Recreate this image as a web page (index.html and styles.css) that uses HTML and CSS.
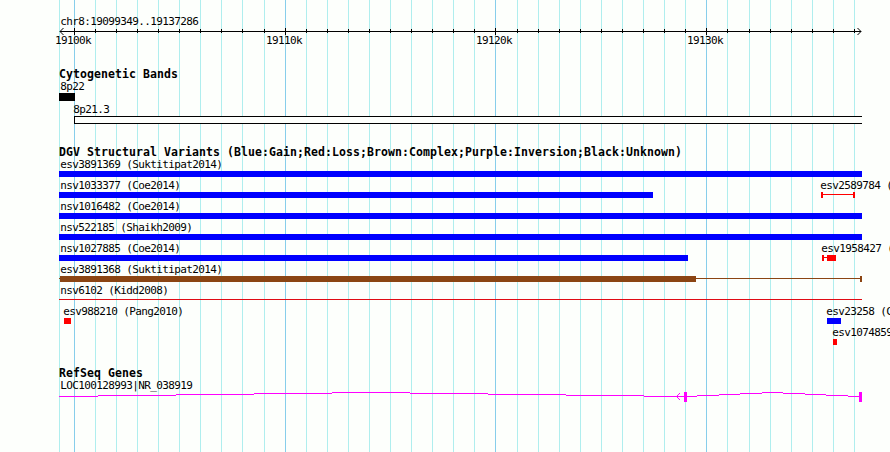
FILE: index.html
```
<!DOCTYPE html>
<html>
	<head>
		<meta charset="utf-8">
		<title>chr8:19099349..19137286</title>
		<link rel="stylesheet" href="styles.css">
	</head>
	<body>
		<div class="panel">
			<svg class="grid" id="grid" width="890" height="452"></svg>

			<div class="track ruler">
				<svg width="890" height="70">
					<text x="60.3" y="25">chr8:19099349..19137286</text>
					<g id="ticks"></g>
					<path class="axis" d="M60 31.5H861" />
					<path class="arrow" d="M63.5 28L60 31.5L63.5 35M857.5 28L861 31.5L857.5 35" />
					<text x="55" y="44">19100k</text>
					<text x="266" y="44">19110k</text>
					<text x="476" y="44">19120k</text>
					<text x="687" y="44">19130k</text>
				</svg>
			</div>

			<div class="track bands">
				<h2>Cytogenetic Bands</h2>
				<svg width="890" height="66">
					<text x="60.3" y="8">8p22</text>
					<rect x="59" y="11" width="16" height="8" />
					<text x="73.3" y="31">8p21.3</text>
					<rect class="white" x="74" y="34" width="788" height="8" />
					<path class="axis" d="M862 34.5H74.5V41.5H862" />
				</svg>
			</div>

			<div class="track variants">
				<h2>DGV Structural Variants (Blue:Gain;Red:Loss;Brown:Complex;Purple:Inversion;Black:Unknown)</h2>
				<svg width="890" height="209">
					<text x="60.3" y="8">esv3891369 (Suktitipat2014)</text>
					<rect class="gain" x="59" y="11" width="803" height="6" />

					<text x="60.3" y="29">nsv1033377 (Coe2014)</text>
					<rect class="gain" x="59" y="32" width="594" height="6" />
					<text x="820.3" y="29">esv2589784 (</text>
					<path class="loss" d="M821 32h2v2h30v-2h2v6h-2v-3h-30v3h-2z" />

					<text x="60.3" y="50">nsv1016482 (Coe2014)</text>
					<rect class="gain" x="59" y="53" width="803" height="6" />

					<text x="60.3" y="71">nsv522185 (Shaikh2009)</text>
					<rect class="gain" x="59" y="74" width="803" height="6" />

					<text x="60.3" y="92">nsv1027885 (Coe2014)</text>
					<rect class="gain" x="59" y="95" width="629" height="6" />
					<text x="821.3" y="92">esv1958427 (</text>
					<path class="loss" d="M822 95h2v2h3v-2h9v6h-9v-3h-3v3h-2z" />

					<text x="60.3" y="113">esv3891368 (Suktitipat2014)</text>
					<path class="complex" d="M59 118h1v-2h636v2h164v-2h2v6h-2v-3h-164v3h-636v-3h-1z" />

					<text x="60.3" y="134">nsv6102 (Kidd2008)</text>
					<rect class="line" x="59" y="139" width="803" height="1" />

					<text x="63.3" y="155">esv988210 (Pang2010)</text>
					<rect class="loss" x="64" y="158" width="7" height="6" />
					<text x="826.3" y="155">esv23258 (C</text>
					<rect class="gain" x="827" y="158" width="14" height="6" />

					<text x="832.3" y="176">esv1074859</text>
					<rect class="loss" x="833" y="179" width="4" height="6" />
				</svg>
			</div>

			<div class="track genes">
				<h2>RefSeq Genes</h2>
				<svg width="890" height="71">
					<text x="60.3" y="8">LOC100128993|NR_038919</text>
					<path class="intron" d="M59 15.5H98M98 14.5H176M176 13.5H254M254 12.5H332M332 11.5H410M410 12.5H488M488 13.5H566M566 14.5H644M644 15.5H684" />
					<path class="intron" d="M687 15.5H697M697 14.5H719M719 13.5H740M740 12.5H762M762 11.5H783M783 12.5H805M805 13.5H826M826 14.5H848M848 15.5H859" />
					<path class="intron arrow" d="M680 12L676.5 15.5L680 19" />
					<rect class="exon" x="684" y="11" width="3" height="10" />
					<rect class="exon" x="859" y="11" width="3" height="10" />
				</svg>
			</div>
		</div>

		<script type="text/javascript">
			var grid = document.getElementById("grid");
			var ticks = document.getElementById("ticks");
			var ns = "http://www.w3.org/2000/svg";

			function addRect(parent, x, y, h, cls) {
				var r = document.createElementNS(ns, "rect");
				r.setAttribute("x", x);
				r.setAttribute("y", y);
				r.setAttribute("width", 1);
				r.setAttribute("height", h);
				r.setAttribute("class", cls);
				parent.appendChild(r);
			}

			addRect(grid, 59, 0, 452, "minor");
			// one line per 1k, every tenth is major
			for (var i = 0; i <= 37; i++) {
				var x = Math.floor(74.195 + i * 21.09);
				var major = i % 10 == 0;
				addRect(grid, x, 0, 452, major ? "major" : "minor");
				addRect(ticks, x, major ? 28 : 29, major ? 7 : 4, "tick");
			}
		</script>
	</body>
</html>
```
FILE: styles.css
```
body {
	margin: 0;
	background: #fdfffc;
	overflow: hidden;
}

.panel {
	position: relative;
	width: 890px;
	height: 452px;
	overflow: hidden;
	font-family: "DejaVu Sans Mono", monospace;
	font-size: 11px;
	color: #000000;
}

.grid {
	position: absolute;
	top: 0;
	left: 0;
}

.track {
	position: relative;
}

.track svg {
	display: block;
	overflow: visible;
}

.track h2 {
	margin: 0;
	padding-left: 59px;
	height: 14px;
	line-height: 12px;
	font-size: 11.5px;
	font-weight: 700;
	letter-spacing: 0.077px;
	white-space: pre;
}

.ruler {
	height: 68px;
}

.bands {
	height: 78px;
}

.variants {
	height: 221px;
}

text {
	letter-spacing: -0.622px;
	white-space: pre;
}

rect,
path {
	shape-rendering: crispEdges;
}

.minor {
	fill: #afeeee;
}

.major {
	fill: #87ceeb;
}

.axis,
.arrow {
	fill: none;
	stroke: #000000;
}

.arrow {
	shape-rendering: auto;
}

.white {
	fill: #fdfffc;
}

.gain {
	fill: #0000ff;
}

.loss {
	fill: #ff0000;
}

.complex {
	fill: #8b4513;
}

.line {
	fill: #e00b14;
}

.intron {
	fill: none;
	stroke: #ff00ff;
}

.exon {
	fill: #ff00ff;
}
```
